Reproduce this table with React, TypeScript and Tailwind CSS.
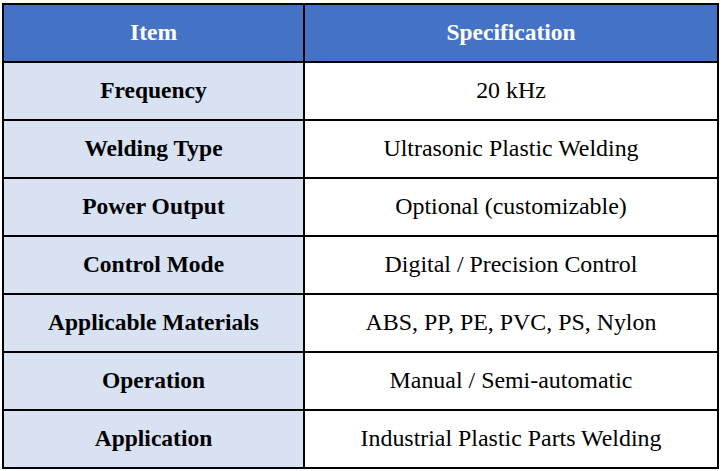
const rows: [string, string][] = [
  ['Frequency', '20 kHz'],
  ['Welding Type', 'Ultrasonic Plastic Welding'],
  ['Power Output', 'Optional (customizable)'],
  ['Control Mode', 'Digital / Precision Control'],
  ['Applicable Materials', 'ABS, PP, PE, PVC, PS, Nylon'],
  ['Operation', 'Manual / Semi-automatic'],
  ['Application', 'Industrial Plastic Parts Welding'],
]

export default function App() {
  return (
    <div className="min-h-screen w-full bg-white pl-[2px] pt-[3px] font-[family-name:'Liberation_Serif','Times_New_Roman',serif] text-[23.5px] leading-none text-black">
      <div className="w-[717px] border-2 border-black">
        {/* header */}
        <div className="grid grid-cols-[301px_1fr] border-b-2 border-black bg-[#4472c4] font-bold text-white">
          <div className="flex h-[56px] items-center justify-center border-r-2 border-black">Item</div>
          <div className="flex h-[56px] items-center justify-center">Specification</div>
        </div>
        {rows.map(([item, spec], i) => (
          <div
            key={item}
            className={`grid grid-cols-[301px_1fr] ${i < rows.length - 1 ? 'border-b-2 border-black' : ''}`}
          >
            <div className="flex h-[56px] items-center justify-center border-r-2 border-black bg-[#d9e2f3] font-bold">
              {item}
            </div>
            <div className="flex h-[56px] items-center justify-center bg-white text-[23.9px]">{spec}</div>
          </div>
        ))}
      </div>
    </div>
  )
}
